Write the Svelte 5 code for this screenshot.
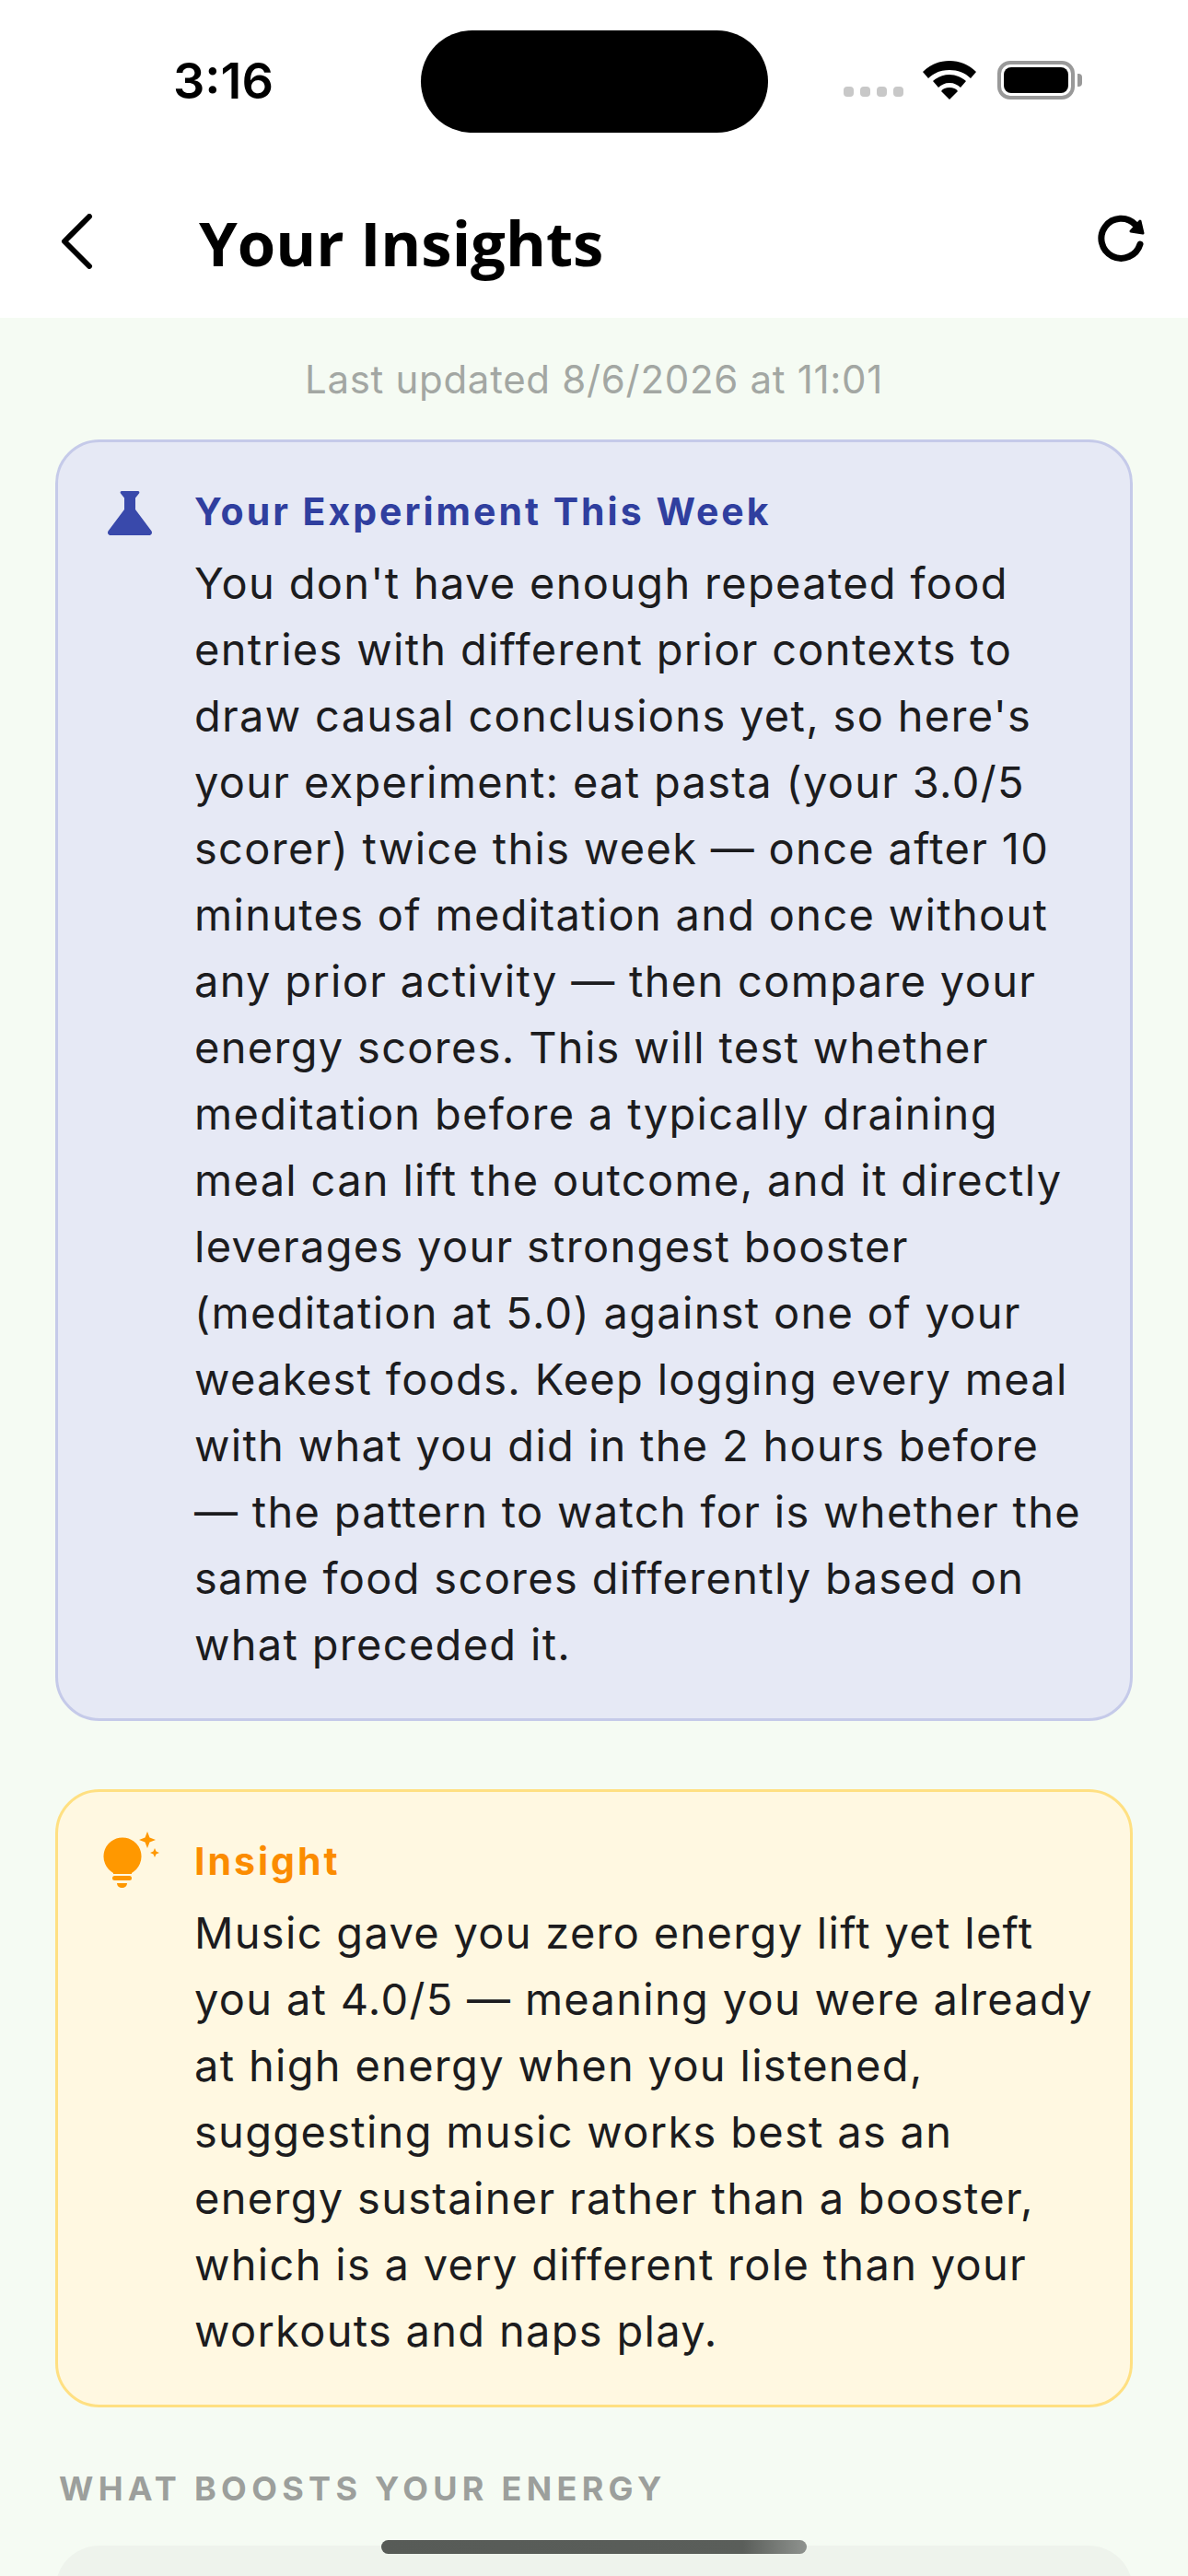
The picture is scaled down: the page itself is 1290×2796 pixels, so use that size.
<script lang="ts">
  const experiment = [
    "You don't have enough repeated food",
    'entries with different prior contexts to',
    "draw causal conclusions yet, so here's",
    'your experiment: eat pasta (your 3.0/5',
    'scorer) twice this week — once after 10',
    'minutes of meditation and once without',
    'any prior activity — then compare your',
    'energy scores. This will test whether',
    'meditation before a typically draining',
    'meal can lift the outcome, and it directly',
    'leverages your strongest booster',
    '(meditation at 5.0) against one of your',
    'weakest foods. Keep logging every meal',
    'with what you did in the 2 hours before',
    '— the pattern to watch for is whether the',
    'same food scores differently based on',
    'what preceded it.',
  ];
  const insight = [
    'Music gave you zero energy lift yet left',
    'you at 4.0/5 — meaning you were already',
    'at high energy when you listened,',
    'suggesting music works best as an',
    'energy sustainer rather than a booster,',
    'which is a very different role than your',
    'workouts and naps play.',
  ];
</script>

<div class="screen">
  <header class="top">
    <div class="status">
      <span class="time">3:16</span>
      <div class="island"></div>
      <div class="status-icons">
        <div class="dots"><i></i><i></i><i></i><i></i></div>
        <svg class="wifi" width="58" height="42" viewBox="0 0 58 42">
          <path d="M29 0C18 0 8 4 0 12l6 7C12 13 20 10 29 10s17 3 23 9l6-7C50 4 40 0 29 0z" fill="#000" />
          <path d="M29 15c-7 0-13 3-18 7l6 7c3-3 7-5 12-5s9 2 12 5l6-7c-5-4-11-7-18-7z" fill="#000" />
          <path d="M29 29c-4 0-7 1-9 4l9 9 9-9c-2-3-5-4-9-4z" fill="#000" />
        </svg>
        <div class="battery"><div class="battery-fill"></div></div>
        <div class="battery-cap"></div>
      </div>
    </div>
    <div class="nav">
      <svg class="back" width="40" height="60" viewBox="0 0 40 60">
        <path d="M34 3 7 30l27 27" fill="none" stroke="#000" stroke-width="6" stroke-linecap="round" stroke-linejoin="round" />
      </svg>
      <h1>Your Insights</h1>
      <svg class="refresh" width="60" height="60" viewBox="0 0 60 60">
        <path d="M50 36A21.5 21.5 0 1 1 45 15" fill="none" stroke="#000" stroke-width="7" stroke-linecap="round" />
        <path d="M50 11l3 13-13-2z" fill="#000" stroke="#000" stroke-width="3" stroke-linejoin="round" />
      </svg>
    </div>
  </header>

  <main class="content">
    <p class="updated">Last updated 8/6/2026 at 11:01</p>

    <section class="card experiment">
      <svg class="card-icon" width="72" height="72" viewBox="0 0 24 24">
        <path d="M19.8 18.4 14 10.67V6.5l1.35-1.69c.26-.33.03-.81-.39-.81H9.04c-.42 0-.65.48-.39.81L10 6.5v4.17L4.2 18.4c-.49.66-.02 1.6.8 1.6h14c.82 0 1.29-.94.8-1.6z" fill="#3949ab" />
      </svg>
      <div class="card-body">
        <h2>Your Experiment This Week</h2>
        {#each experiment as line}
          <p>{line}</p>
        {/each}
      </div>
    </section>

    <section class="card insight">
      <svg class="card-icon" width="66" height="66" viewBox="0 0 66 66">
        <path d="M23 7.5a20.5 20.5 0 0 1 10 38.4V47H13v-1.1A20.5 20.5 0 0 1 23 7.5z" fill="#ff9800" />
        <rect x="12" y="49" width="21" height="5" rx="2.5" fill="#ff9800" />
        <path d="M17 57h11c0 3-2.5 5-5.5 5S17 60 17 57z" fill="#ff9800" />
        <path d="M50 1l2.5 6.5L59 10l-6.5 2.5L50 19l-2.5-6.5L41 10l6.5-2.5z" fill="#ff9800" />
        <path d="M58 19l1.5 3.5L63 24l-3.5 1.5L58 29l-1.5-3.5L53 24l3.5-1.5z" fill="#ff9800" />
      </svg>
      <div class="card-body">
        <h2>Insight</h2>
        {#each insight as line}
          <p>{line}</p>
        {/each}
      </div>
    </section>

    <h3 class="section-label">WHAT BOOSTS YOUR ENERGY</h3>
    <div class="card-next"></div>
  </main>

  <div class="home-indicator"></div>
</div>

<style>
  :global(body) {
    margin: 0;
    background: #f5fbf3;
  }
  .screen {
    position: relative;
    width: 1290px;
    height: 2796px;
    overflow: hidden;
    background: #f5fbf3;
    font-family: Inter, "Liberation Sans", sans-serif;
  }
  .top {
    height: 345px;
    background: #fff;
  }
  .status {
    height: 177px;
    box-sizing: border-box;
    padding-top: 33px;
    display: flex;
    align-items: flex-start;
  }
  .time {
    margin: 24px 0 0 188px;
    width: 269px;
    font-family: Inter, "Liberation Sans", sans-serif;
    font-size: 54px;
    font-weight: 600;
    line-height: 62px;
    color: #000;
  }
  .island {
    width: 377px;
    height: 111px;
    border-radius: 56px;
    background: #000;
  }
  .status-icons {
    margin: 32px 0 0 82px;
    height: 44px;
    display: flex;
    align-items: center;
  }
  .dots {
    display: flex;
    gap: 7px;
    margin-top: 24px;
  }
  .dots i {
    width: 11px;
    height: 11px;
    border-radius: 4px;
    background: #c8c8c8;
  }
  .wifi {
    margin-left: 21px;
  }
  .battery {
    margin-left: 23px;
    width: 84px;
    height: 42px;
    box-sizing: border-box;
    border: 4px solid #999;
    border-radius: 14px;
    padding: 3px;
  }
  .battery-fill {
    height: 100%;
    border-radius: 8px;
    background: #000;
  }
  .battery-cap {
    width: 5px;
    height: 14px;
    margin-left: 3px;
    border-radius: 0 4px 4px 0;
    background: #999;
  }
  .nav {
    height: 168px;
    display: flex;
    align-items: center;
    box-sizing: border-box;
    padding: 0 42px 0 63px;
  }
  .back {
    flex: none;
    margin-top: 2px;
  }
  h1 {
    flex: 1;
    margin: 4px 0 0 113px;
    font-family: "Open Sans", sans-serif;
    font-size: 67px;
    font-weight: 700;
    line-height: 90px;
    color: #000;
  }
  .refresh {
    flex: none;
    margin-top: -4px;
  }
  .content {
    padding: 0 60px;
  }
  .updated {
    margin: 0;
    padding-top: 41px;
    height: 132px;
    box-sizing: border-box;
    text-align: center;
    font-size: 42px;
    line-height: 52px;
    letter-spacing: 0.7px;
    color: #a3a7a3;
  }
  .card {
    display: flex;
    box-sizing: border-box;
    border: 3px solid;
    border-radius: 48px;
    padding: 41px 48px 44px 42px;
  }
  .experiment {
    background: #e6e9f5;
    border-color: #c5cae9;
  }
  .insight {
    margin-top: 74px;
    background: #fff8e1;
    border-color: #ffe082;
  }
  .card-icon {
    flex: none;
    margin-right: 34px;
  }
  .insight .card-icon {
    margin: 1px 35px 0 5px;
  }
  .card-body {
    min-width: 0;
  }
  h2 {
    margin: 7px 0 15px;
    font-size: 41px;
    font-weight: 700;
    line-height: 54px;
    letter-spacing: 3px;
  }
  .experiment h2 {
    color: #303f9f;
  }
  .insight h2 {
    color: #fb8c00;
  }
  .card-body p {
    margin: 0;
    font-size: 47px;
    line-height: 72px;
    letter-spacing: 1.3px;
    white-space: nowrap;
    color: #1c1c1e;
  }
  .section-label {
    margin: 66px 0 0 4px;
    font-size: 36px;
    font-weight: 700;
    line-height: 44px;
    letter-spacing: 5.3px;
    color: #9c9f9c;
  }
  .card-next {
    margin-top: 40px;
    height: 200px;
    border-radius: 48px;
    background: #eef3ec;
  }
  .home-indicator {
    position: absolute;
    left: 414px;
    top: 2757px;
    width: 462px;
    height: 15px;
    border-radius: 8px;
    background: linear-gradient(90deg, #575b57 0%, #5a5e5a 85%, #8f938f 100%);
  }
</style>
